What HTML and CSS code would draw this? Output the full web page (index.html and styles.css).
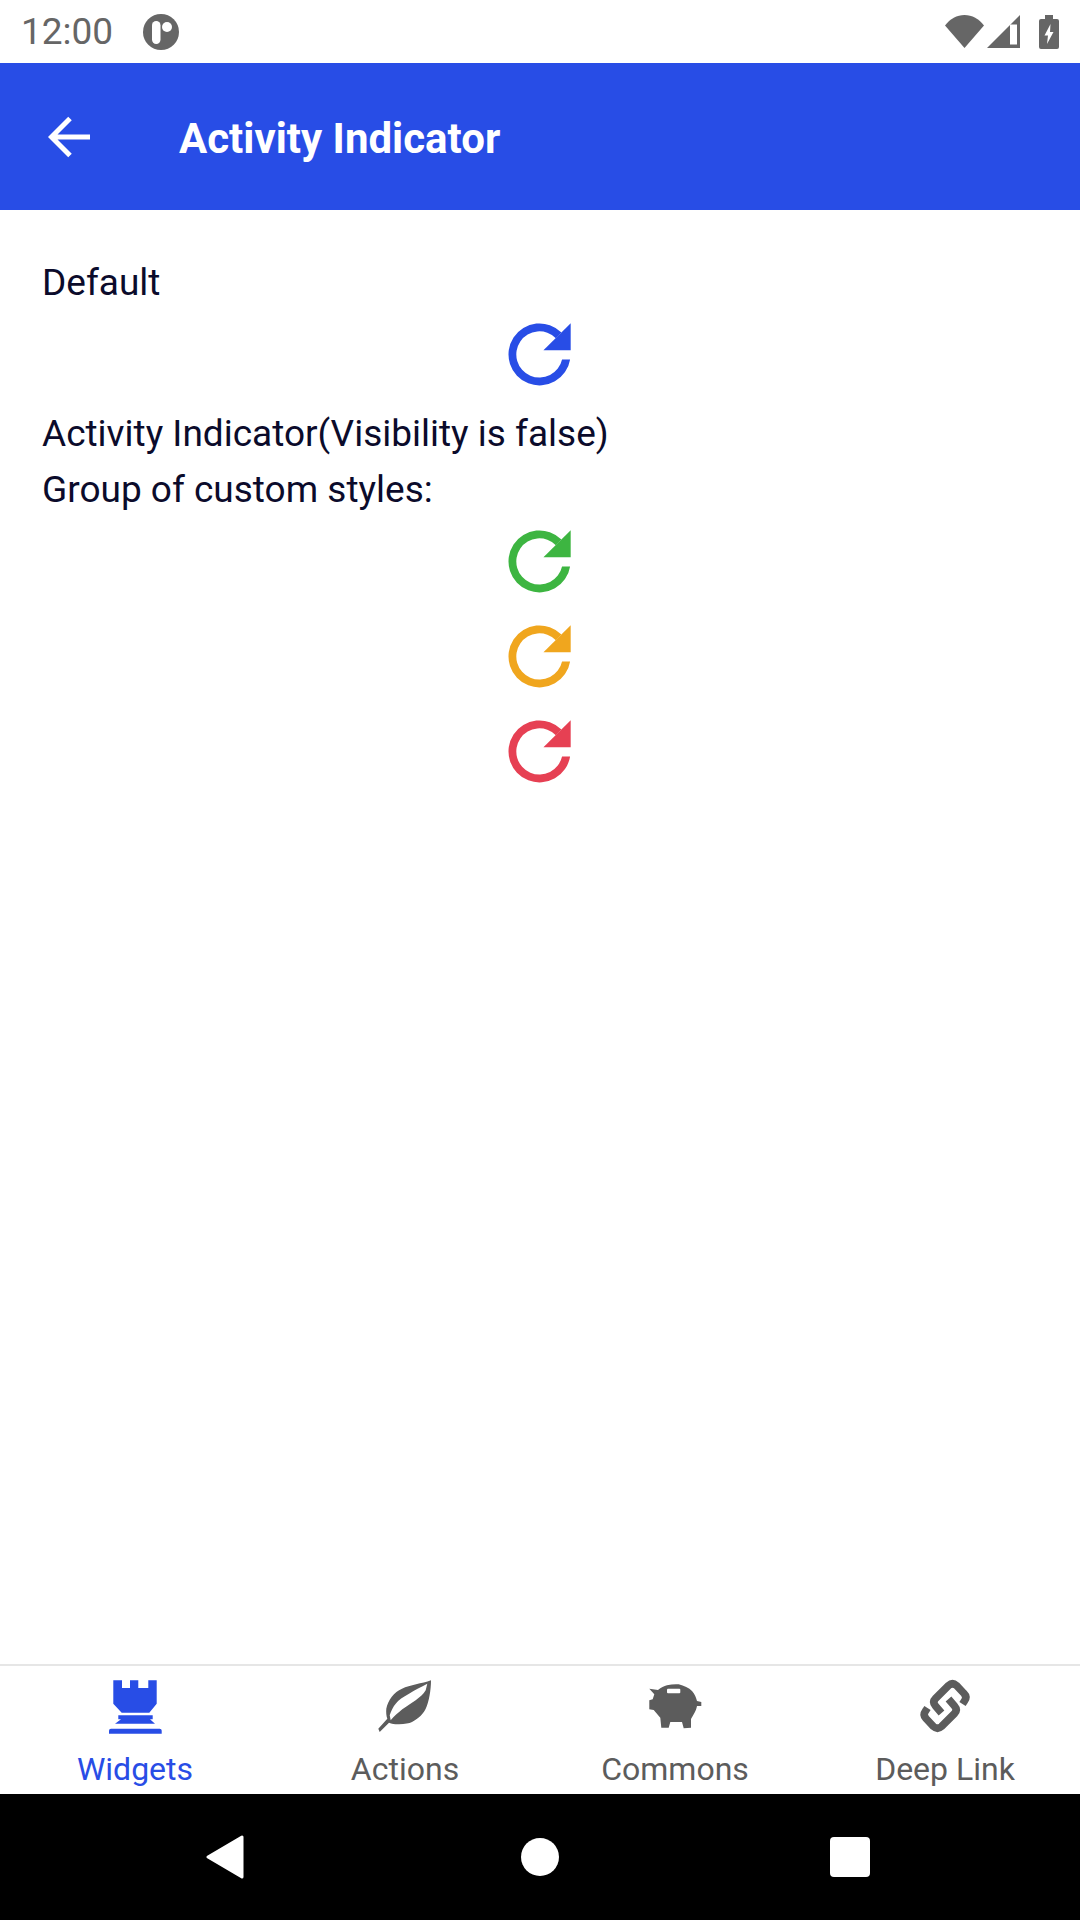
FILE: index.html
```html
<!DOCTYPE html>
<html lang="en">
<head>
    <meta charset="UTF-8">
    <meta name="viewport" content="width=device-width, initial-scale=1.0">
    <title>Activity Indicator</title>
    <link rel="stylesheet" href="styles.css">
</head>
<body>
    <svg class="defs" width="0" height="0">
        <symbol id="redo" viewBox="0 0 64 64">
            <path d="M63.1 37A31.5 31.5 0 1 1 54.3 9.7L48.6 15.4A23.5 23.5 0 1 0 54.9 37Z"/>
            <path d="M63.7 0.3V27.7H36Z"/>
        </symbol>
    </svg>
    <div class="app">
        <div class="status-bar">
            <div class="status-left">
                <span class="clock">12:00</span>
                <svg class="status-app" viewBox="0 0 36 36">
                    <circle cx="18" cy="18" r="18" fill="#666"/>
                    <rect x="9" y="7" width="8.5" height="23" rx="4.2" fill="#fff"/>
                    <circle cx="24" cy="13" r="5" fill="#fff"/>
                </svg>
            </div>
            <div class="status-right">
                <svg class="wifi" width="39" height="33" viewBox="0 0 39 33">
                    <path d="M19.5 33L0 10.5C5 4 12 0 19.5 0S34 4 39 10.5Z" fill="#666"/>
                </svg>
                <svg class="cell" width="33" height="33" viewBox="0 0 33 33">
                    <path d="M0 33L33 0V33Z" fill="#666"/>
                    <path d="M23 9.5H30V29.5H23Z" fill="#fff"/>
                </svg>
                <svg class="battery" width="20" height="34" viewBox="0 0 20 34">
                    <path d="M6 0H14V4H18Q20 4 20 6V32Q20 34 18 34H2Q0 34 0 32V6Q0 4 2 4H6Z" fill="#666"/>
                    <path d="M11.5 9L5.5 20.5H9L8 29L14.5 17H11Z" fill="#fff"/>
                </svg>
            </div>
        </div>
        <header class="app-header">
            <svg class="back" width="42" height="42" viewBox="0 0 42 42">
                <path d="M42 21H4M22 2.5L3.5 21L22 39.5" fill="none" stroke="#fff" stroke-width="5"/>
            </svg>
            <h1 class="title">Activity Indicator</h1>
        </header>
        <main class="content">
            <div class="label">Default</div>
            <div class="spinners">
                <div class="spinner-row blue"><svg class="spinner"><use href="#redo"/></svg></div>
            </div>
            <div class="label">Activity Indicator(Visibility is false)</div>
            <div class="label">Group of custom styles:</div>
            <div class="spinners">
                <div class="spinner-row green"><svg class="spinner"><use href="#redo"/></svg></div>
                <div class="spinner-row orange"><svg class="spinner"><use href="#redo"/></svg></div>
                <div class="spinner-row red"><svg class="spinner"><use href="#redo"/></svg></div>
            </div>
        </main>
        <nav class="tabs">
            <div class="tab active">
                <svg class="tab-icon" width="53" height="54" viewBox="0 0 53 54">
                    <path d="M4.3 0.3H13V8H21V0.3H29.3V8H39.3V0.3H47.7V23.7L40.3 32.7H12.7L4.3 23.7Z"/>
                    <path d="M9.3 35.3H43.7V39.3H41L46 43.7H6L12 39.3H9.3Z"/>
                    <path d="M2 48.7H50.7Q52.7 48.7 52.7 50.7V53.7H0V50.7Q0 48.7 2 48.7Z"/>
                </svg>
                <span class="tab-label">Widgets</span>
            </div>
            <div class="tab">
                <svg class="tab-icon" width="54" height="54" viewBox="0 0 54 54">
                    <path d="M53 0.3C44 3.5 32 5 24 8.7C16 12 10 20 8.3 28.7C8 32 8.3 36 9.3 38.7L0.3 48.7L1.7 52L11 42.7C14 44 18 44.5 21 44.3C27 44 31 43.5 34 42C41 38 45 34 47.7 28.7C51 22 53 10 53 0.3Z"/>
                    <path d="M49.3 3.7C43 7 37 10 31 13.7C25 17 20.5 20 17.7 23.7C15 27 13 31 11.7 35.3L12.7 40.3C16 36 20 33 24.3 29.3C29 26 33 23.5 37.7 20.3C42 17 45.5 14 47.7 10.3Z" fill="#fff"/>
                </svg>
                <span class="tab-label">Actions</span>
            </div>
            <div class="tab">
                <svg class="tab-icon" width="53" height="54" viewBox="0 -3 53 54">
                    <path d="M0.3 5.7L9 7C12 4.5 15 3 18 2.3C22 1.3 26 1 29.7 1.3C35 2.5 40 5 43 8C46 11 47 15 48 18L52.3 19V23H48C47.5 26 46 29 44.7 31.3L42 36V44.7L34.7 45.3L33 39H21.3L19.7 44.7H12.3L11.3 34.7L4.7 27L0.3 26.3V17.3L3.7 16.3L5.3 11.3Z"/>
                    <rect x="18" y="5.7" width="13.3" height="4.6" rx="1" fill="#fff"/>
                </svg>
                <span class="tab-label">Commons</span>
            </div>
            <div class="tab">
                <svg class="tab-icon" width="50" height="54" viewBox="-1.5 1 50 54">
                    <path d="M41 25L43 22Q46 18 42.5 14.5L35 6.5Q31 3 27 6.5L14 19.5Q10.5 23 14 27L20 34" fill="none" stroke="#5c5c5c" stroke-width="7.5"/>
                    <path d="M6 29L4 32Q1 36 4.5 39.5L12 47.5Q16 51 20 47.5L33 34.5Q36.5 31 33 27L27 20" fill="none" stroke="#5c5c5c" stroke-width="7.5"/>
                </svg>
                <span class="tab-label">Deep Link</span>
            </div>
        </nav>
        <div class="system-nav">
            <svg class="back-button" width="38" height="44" viewBox="0 0 38 44">
                <path d="M36 2V42L2 22Z" fill="#fff" stroke="#fff" stroke-width="3" stroke-linejoin="round"/>
            </svg>
            <div class="home-button"></div>
            <div class="recent-button"></div>
        </div>
    </div>
</body>
</html>
```

FILE: styles.css
```css
* {
    box-sizing: border-box;
}

body {
    margin: 0;
    font-family: Roboto, "Liberation Sans", sans-serif;
    background-color: #ffffff;
}

.defs {
    position: absolute;
}

.app {
    width: 1080px;
    height: 1920px;
    display: flex;
    flex-direction: column;
}

.status-bar {
    height: 63px;
    padding: 0 21px 0 21px;
    display: flex;
    align-items: center;
    justify-content: space-between;
}

.status-left {
    display: flex;
    align-items: center;
    gap: 30px;
}

.clock {
    font-size: 37px;
    font-weight: 400;
    color: #666666;
}

.status-app {
    width: 36px;
    height: 36px;
}

.status-right {
    display: flex;
    align-items: center;
    gap: 3px;
}

.battery {
    margin-left: 16px;
}

.app-header {
    height: 147px;
    padding-left: 48px;
    display: flex;
    align-items: center;
    background-color: #284de6;
}

.title {
    margin: 4px 0 0 89px;
    font-size: 42px;
    font-weight: 700;
    color: #ffffff;
}

.content {
    flex: 1;
    padding-top: 45px;
}

.label {
    padding-left: 42px;
    font-size: 37px;
    line-height: 56px;
    color: #0b0b2b;
}

.spinners {
    margin: -4px 0 4px;
}

.spinner-row {
    height: 95px;
    padding-right: 2px;
    display: flex;
    align-items: center;
    justify-content: center;
}

.spinner {
    width: 63px;
    height: 63px;
    fill: currentColor;
}

.blue {
    color: #284de6;
}

.green {
    color: #3db541;
}

.orange {
    color: #f0a61e;
}

.red {
    color: #e64053;
}

.tabs {
    height: 130px;
    display: flex;
    border-top: 2px solid #e6e6e6;
}

.tab {
    flex: 1;
    padding-top: 14px;
    display: flex;
    flex-direction: column;
    align-items: center;
    gap: 15px;
    color: #5c5c5c;
}

.tab.active {
    color: #284de6;
}

.tab-icon {
    fill: currentColor;
    overflow: visible;
}

.tab-label {
    font-size: 32px;
    line-height: 40px;
}

.system-nav {
    height: 126px;
    padding: 0 67px;
    display: grid;
    grid-template-columns: repeat(3, 1fr);
    align-items: center;
    justify-items: center;
    background-color: #000000;
}

.home-button {
    width: 38px;
    height: 38px;
    border-radius: 50%;
    background-color: #ffffff;
}

.recent-button {
    width: 40px;
    height: 40px;
    margin-right: 10px;
    border-radius: 4px;
    background-color: #ffffff;
}
```
